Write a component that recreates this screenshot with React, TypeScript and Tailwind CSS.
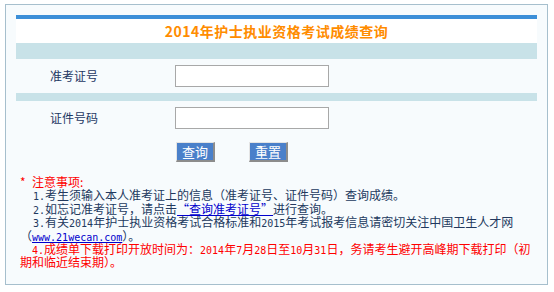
import React from "react";

const font = { fontFamily: '"Noto Sans CJK SC", "Noto Sans", sans-serif' };

function M({ children }: { children: React.ReactNode }) {
  return <span className="font-['DejaVu_Sans_Mono',monospace] text-[10px] leading-none">{children}</span>;
}

const btn =
  "w-[39px] h-[20px] bg-[#4a80ca] border-t border-l border-[#e4e4e4] border-r-2 border-b-2 border-r-[#8c8c8c] border-b-[#8c8c8c] flex items-center justify-center text-white text-[13px] leading-none";

const line = "h-[13.4px] leading-[13.4px]";

export default function App() {
  return (
    <div className="w-[554px] h-[292px] bg-white overflow-hidden" style={font}>
      <div className="ml-[5px] mt-[4px] w-[543px] h-[281px] border border-[#a6bfcd] bg-[#f7fbfd] pt-[10px] pl-[10px]">
        <div className="w-[521px]">
          <div className="h-[4px] bg-[#3c8fd8]" />
          <div className="h-[24px] bg-white flex items-center justify-center">
            <span className="text-[14px] font-bold text-[#ff8c00] leading-none tracking-[0.5px]">2014年护士执业资格考试成绩查询</span>
          </div>
          <div className="h-[16px] bg-[#c8e2e8]" />
          <div className="h-[34px] flex items-center">
            <span className="w-[159px] pl-[34px] text-[12px] text-[#1d3863]">准考证号</span>
            <div className="w-[154px] h-[22px] bg-white border border-[#a8a8a8]" />
          </div>
          <div className="h-[8px] bg-[#c8e2e8]" />
          <div className="h-[34px] flex items-center">
            <span className="w-[159px] pl-[34px] text-[12px] text-[#1d3863]">证件号码</span>
            <div className="w-[154px] h-[22px] bg-white border border-[#a8a8a8]" />
          </div>
          <div className="mt-[7px] flex pl-[160px] gap-[34px]">
            <div className={btn}>查询</div>
            <div className={btn}>重置</div>
          </div>
        </div>
        <div className="mt-[13px] pl-[4px] text-[12px] text-[#22395e] whitespace-nowrap">
          <div className={`${line} text-[#ff0000]`}><span className="inline-block w-[12px]">*</span>注意事项:</div>
          <div className={`${line} pl-[13px]`}><M>1.</M>考生须输入本人准考证上的信息（准考证号、证件号码）查询成绩。</div>
          <div className={`${line} pl-[13px]`}><M>2.</M>如忘记准考证号，请点击<span className="text-[#0000cc] underline">“查询准考证号”</span>进行查询。</div>
          <div className={`${line} pl-[13px]`}><M>3.</M>有关<M>2014</M>年护士执业资格考试合格标准和<M>2015</M>年考试报考信息请密切关注中国卫生人才网</div>
          <div className={line}>（<span className="text-[#0000cc] underline"><M>www.21wecan.com</M></span>）。</div>
          <div className={`${line} pl-[12px] text-[#ff0000]`}><M>4.</M>成绩单下载打印开放时间为：<M>2014</M>年<M>7</M>月<M>28</M>日至<M>10</M>月<M>31</M>日，务请考生避开高峰期下载打印（初</div>
          <div className={`${line} text-[#ff0000]`}>期和临近结束期）。</div>
        </div>
      </div>
    </div>
  );
}
